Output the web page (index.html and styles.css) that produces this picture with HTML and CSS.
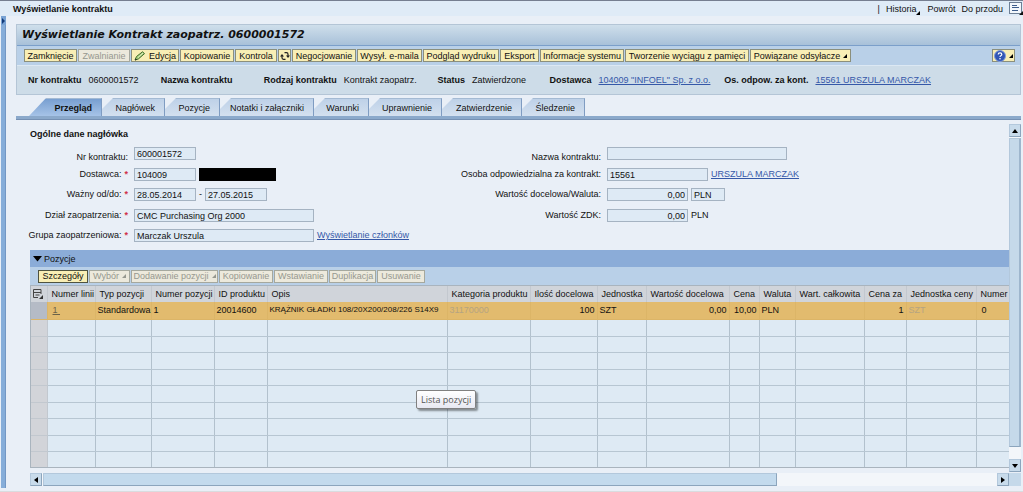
FILE: index.html
```html
<!DOCTYPE html>
<html lang="pl">
<head>
<meta charset="utf-8">
<title>Wyświetlanie kontraktu</title>
<link rel="stylesheet" href="styles.css">
</head>
<body>
<header class="topbar">
  <h1 class="topbar-title">Wyświetlanie kontraktu</h1>
  <nav class="topbar-nav">
    <span class="sep">|</span>
    <button class="nav-item history">Historia<svg class="corner" viewBox="0 0 4 4"><path d="M4 0V4H0z"/></svg></button>
    <button class="nav-item">Powrót</button>
    <button class="nav-item">Do przodu</button>
    <button class="nav-icon" aria-label="Menu"><svg viewBox="0 0 14 13" width="14" height="13"><rect x=".5" y=".5" width="12" height="11" fill="#f2f7fc" stroke="#6d7f96"/><path d="M3 3.5h5M3 5.5h7M3 8.5h6" stroke="#3c5c8c"/><path d="M14 9v4h-4z" fill="#111"/></svg></button>
  </nav>
</header>
<div class="shell">
  <aside class="rail"><button class="rail-toggle" aria-label="Rozwiń"><svg viewBox="0 0 5 8" width="5" height="8"><path d="M1 1l3 3-3 3z" fill="#123a78"/></svg></button></aside>
  <main class="page">
    <section class="head">
      <h2 class="head-title">Wyświetlanie Kontrakt zaopatrz. 0600001572</h2>
      <div class="toolbar">
        <button class="btn">Zamknięcie</button>
        <button class="btn" disabled>Zwalnianie</button>
        <button class="btn"><svg class="pencil" viewBox="0 0 12 10" width="12" height="10"><path d="M1 9l1.500-3.500L8.500.8l2 1.800L4.300 8z" fill="#a9cf7b" stroke="#3f6b2a"/><path d="M1 9.500l.6-2 1.400 1.200z" fill="#222"/><path d="M4 6.500l5-4.500" stroke="#f2f8d8" stroke-width=".8"/></svg>Edycja</button>
        <button class="btn">Kopiowanie</button>
        <button class="btn">Kontrola</button>
        <button class="btn" aria-label="Odśwież"><svg viewBox="0 0 10 10" width="10" height="10"><path d="M4.500 1.700H6.500Q8 1.700 8 3.200V5M5.500 8.300H3.500Q2 8.300 2 6.800V5" fill="none" stroke="#222" stroke-width="1.200"/><path d="M6 4.500h4L8 7zM0 5.500h4L2 3z" fill="#222"/></svg></button>
        <button class="btn">Negocjowanie</button>
        <button class="btn">Wysył. e-maila</button>
        <button class="btn">Podgląd wydruku</button>
        <button class="btn">Eksport</button>
        <button class="btn">Informacje systemu</button>
        <button class="btn">Tworzenie wyciągu z pamięci</button>
        <button class="btn">Powiązane odsyłacze<svg class="corner" viewBox="0 0 4 4"><path d="M4 0V4H0z"/></svg></button>
        <button class="btn help" aria-label="Pomoc"><svg viewBox="0 0 12 12" width="12" height="12"><circle cx="6" cy="6" r="5.500" fill="#3156b4" stroke="#7f9bdc"/><path d="M4.200 4.600Q4.200 2.800 6 2.800T7.800 4.400Q7.800 5.300 6.800 5.800 6 6.200 6 7" fill="none" stroke="#fff" stroke-width="1.200"/><circle cx="6" cy="8.800" r=".8" fill="#fff"/></svg><svg class="corner" viewBox="0 0 4 4"><path d="M4 0V4H0z"/></svg></button>
      </div>
      <dl class="info">
        <div><dt>Nr kontraktu</dt><dd>0600001572</dd></div>
        <div><dt>Nazwa kontraktu</dt></div>
        <div><dt>Rodzaj kontraktu</dt><dd>Kontrakt zaopatrz.</dd></div>
        <div><dt>Status</dt><dd>Zatwierdzone</dd></div>
        <div><dt>Dostawca</dt><dd><a href="#">104009 "INFOEL" Sp. z o.o.</a></dd></div>
        <div><dt>Os. odpow. za kont.</dt><dd><a href="#">15561 URSZULA MARCZAK</a></dd></div>
      </dl>
    </section>
    <nav class="tabs">
      <button class="tab active">Przegląd</button>
      <button class="tab">Nagłówek</button>
      <button class="tab">Pozycje</button>
      <button class="tab">Notatki i załączniki</button>
      <button class="tab">Warunki</button>
      <button class="tab">Uprawnienie</button>
      <button class="tab">Zatwierdzenie</button>
      <button class="tab">Śledzenie</button>
    </nav>
    <div class="view">
      <div class="content">
        <h3 class="section-title">Ogólne dane nagłówka</h3>
        <form class="forms">
          <div class="fields">
            <label for="nr" class="low">Nr kontraktu:</label><div><input id="nr" class="w-s" value="600001572" readonly></div>
            <label for="dost">Dostawca: <b>*</b></label><div><input id="dost" class="w-s" value="104009" readonly><span class="redacted"></span></div>
            <label for="od">Ważny od/do: <b>*</b></label><div><input id="od" class="w-s" value="28.05.2014" readonly><span class="dash">-</span><input class="w-s" aria-label="Ważny do" value="27.05.2015" readonly></div>
            <label for="dzial">Dział zaopatrzenia: <b>*</b></label><div><input id="dzial" class="w-l" value="CMC Purchasing Org 2000" readonly></div>
            <label for="grupa">Grupa zaopatrzeniowa: <b>*</b></label><div><input id="grupa" class="w-l" value="Marczak Urszula" readonly><a href="#">Wyświetlanie członków</a></div>
          </div>
          <div class="fields right">
            <label for="nazwa" class="low">Nazwa kontraktu:</label><div><input id="nazwa" class="w-l" readonly></div>
            <label for="osoba">Osoba odpowiedzialna za kontrakt:</label><div><input id="osoba" class="w-m" value="15561" readonly><a href="#">URSZULA MARCZAK</a></div>
            <label for="wart">Wartość docelowa/Waluta:</label><div><input id="wart" class="w-n" value="0,00" readonly><input class="w-c" aria-label="Waluta" value="PLN" readonly></div>
            <label for="zdk">Wartość ZDK:</label><div><input id="zdk" class="w-n" value="0,00" readonly><span>PLN</span></div>
          </div>
        </form>
        <section class="tray">
          <h3 class="tray-title"><svg viewBox="0 0 9 6" width="9" height="6"><path d="M0 0h9L4.500 5.500z"/></svg>Pozycje</h3>
          <div class="tray-tools">
            <button class="btn strong">Szczegóły</button>
            <button class="btn" disabled>Wybór<svg class="corner" viewBox="0 0 4 4"><path d="M4 0V4H0z"/></svg></button>
            <button class="btn" disabled>Dodawanie pozycji<svg class="corner" viewBox="0 0 4 4"><path d="M4 0V4H0z"/></svg></button>
            <button class="btn" disabled>Kopiowanie</button>
            <button class="btn" disabled>Wstawianie</button>
            <button class="btn" disabled>Duplikacja</button>
            <button class="btn" disabled>Usuwanie</button>
          </div>
          <div class="table-clip">
            <table class="items">
              <colgroup><col class="c0"><col class="c1"><col class="c2"><col class="c3"><col class="c4"><col class="c5"><col class="c6"><col class="c7"><col class="c8"><col class="c9"><col class="c10"><col class="c11"><col class="c12"><col class="c13"><col class="c14"><col class="c15"></colgroup>
              <thead><tr><th><svg viewBox="0 0 10 10" width="10" height="10"><path d="M8 5V.5H.5v8H5M.5 3.500h7.500M2.500 6h4" fill="none" stroke="#444"/><path d="M10 6v4H6z" fill="#333"/></svg></th><th>Numer linii</th><th>Typ pozycji</th><th>Numer pozycji</th><th>ID produktu</th><th>Opis</th><th>Kategoria produktu</th><th>Ilość docelowa</th><th>Jednostka</th><th>Wartość docelowa</th><th>Cena</th><th>Waluta</th><th>Wart. całkowita</th><th>Cena za</th><th>Jednostka ceny</th><th>Numer p</th></tr></thead>
              <tbody>
                <tr class="selected"><td></td><td class="in"><a href="#">1&nbsp;</a></td><td>Standardowa</td><td>1</td><td>20014600</td><td class="long">KRĄŻNIK GŁADKI 108/20X200/208/226 S14X9</td><td class="dim">31170000</td><td class="num">100</td><td>SZT</td><td class="num">0,00</td><td class="num">10,00</td><td>PLN</td><td></td><td class="num">1</td><td class="dim">SZT</td><td class="in">0</td></tr>
                <tr><td></td><td></td><td></td><td></td><td></td><td></td><td></td><td></td><td></td><td></td><td></td><td></td><td></td><td></td><td></td><td></td></tr>
                <tr><td></td><td></td><td></td><td></td><td></td><td></td><td></td><td></td><td></td><td></td><td></td><td></td><td></td><td></td><td></td><td></td></tr>
                <tr><td></td><td></td><td></td><td></td><td></td><td></td><td></td><td></td><td></td><td></td><td></td><td></td><td></td><td></td><td></td><td></td></tr>
                <tr><td></td><td></td><td></td><td></td><td></td><td></td><td></td><td></td><td></td><td></td><td></td><td></td><td></td><td></td><td></td><td></td></tr>
                <tr><td></td><td></td><td></td><td></td><td></td><td></td><td></td><td></td><td></td><td></td><td></td><td></td><td></td><td></td><td></td><td></td></tr>
                <tr><td></td><td></td><td></td><td></td><td></td><td></td><td></td><td></td><td></td><td></td><td></td><td></td><td></td><td></td><td></td><td></td></tr>
                <tr><td></td><td></td><td></td><td></td><td></td><td></td><td></td><td></td><td></td><td></td><td></td><td></td><td></td><td></td><td></td><td></td></tr>
                <tr><td></td><td></td><td></td><td></td><td></td><td></td><td></td><td></td><td></td><td></td><td></td><td></td><td></td><td></td><td></td><td></td></tr>
                <tr><td></td><td></td><td></td><td></td><td></td><td></td><td></td><td></td><td></td><td></td><td></td><td></td><td></td><td></td><td></td><td></td></tr>
              </tbody>
            </table>
          </div>
          <div class="tooltip" role="tooltip">Lista pozycji</div>
        </section>
      </div>
      <div class="vscroll">
        <button class="scroll-btn" aria-label="W górę"><svg viewBox="0 0 6 4" width="6" height="4"><path d="M0 4l3-4 3 4z"/></svg></button>
        <div class="vthumb"></div>
        <button class="scroll-btn" aria-label="W dół"><svg viewBox="0 0 6 4" width="6" height="4"><path d="M0 0l3 4 3-4z"/></svg></button>
      </div>
      <div class="hscroll">
        <button class="scroll-btn" aria-label="W lewo"><svg viewBox="0 0 4 6" width="4" height="6"><path d="M4 0L0 3l4 3z"/></svg></button>
        <div class="htrack"><div class="hthumb"></div></div>
        <button class="scroll-btn" aria-label="W prawo"><svg viewBox="0 0 4 6" width="4" height="6"><path d="M0 0l4 3-4 3z"/></svg></button>
      </div>
      <div class="scroll-corner"></div>
    </div>
  </main>
</div>
</body>
</html>
```
FILE: styles.css
```css
* { box-sizing: border-box; }
body {
  margin: 0;
  min-height: 100vh;
  display: flex;
  flex-direction: column;
  background: #e9eff7;
  color: #111;
  font: 9px/12px "Liberation Sans", Arial, sans-serif;
}
button, input { font: inherit; color: inherit; margin: 0; }
button { white-space: nowrap; }
h1, h2, h3, dl, dd { margin: 0; font-size: inherit; }
a { color: #3558a8; }
svg { flex: none; display: block; }
.corner { width: 4px; height: 4px; }

.topbar {
  display: flex;
  align-items: center;
  justify-content: space-between;
  height: 16px;
  padding: 0 0 0 13px;
  border-top: 1px solid #757e90;
  background: #dfebf7;
}
.topbar-nav { display: flex; align-items: center; gap: 6px; }
.nav-item, .nav-icon { border: 0; padding: 0; background: none; }
.history { display: flex; align-items: flex-end; margin-right: 1px; }
.nav-icon { display: flex; }

.shell { flex: 1; display: flex; padding: 0 2px 3px 1px; border-bottom: 1px solid #d9dcdf; }
.rail { width: 5px; background: #86add9; border-right: 1px solid #7397c4; }
.rail-toggle { display: block; width: 5px; height: 9px; padding: 0; border: 0; background: #78a2d4; }
.page { flex: 1; min-width: 0; display: flex; flex-direction: column; padding: 8px 0 2px 10px; }

.head { border: 1px solid #b4c5d6; background: #cddce8; }
.head-title {
  height: 21px;
  padding-left: 5px;
  background: linear-gradient(#cfdfeb, #a8c1d9);
  border-bottom: 1px solid #7b9fca;
  font: italic bold 11px/20px "DejaVu Sans", Verdana, sans-serif;
}
.toolbar {
  display: grid;
  grid-template-columns: 53px 52px 48px 54px 42px 13px 64px 65px 76px 39px 84px 124px 101px 1fr;
  column-gap: 1px;
  align-items: center;
  height: 20px;
  padding: 0 5px 0 7px;
  background: #b9d0e8;
  border-bottom: 1px solid #dce8f3;
}
.btn {
  display: flex;
  align-items: center;
  justify-content: center;
  gap: 3px;
  height: 13px;
  padding: 0;
  border: 1px solid #8b8f7c;
  background: #f8eeb5;
}
.btn:disabled { color: #96988f; background: #ece9dc; border-color: #a5a89e; }
.btn:disabled .corner { fill: #96988f; }
.toolbar .help { width: 23px; justify-self: end; }
.info {
  display: grid;
  grid-template-columns: 133fr 103fr 174fr 112fr 175fr 296fr;
  align-items: center;
  height: 28px;
  padding-left: 11px;
}
.info div { display: flex; gap: 7px; white-space: nowrap; }
.info dt { font-weight: bold; }

.tabs {
  display: grid;
  grid-template-columns: 73px 63px 55px 94px 55px 73px 80px 63px;
  height: 24px;
  padding: 3px 0 0 13px;
  border-bottom: 3px solid #8ba9cb;
}
.tab {
  padding: 0 9px 0 0;
  border: 0;
  border-right: 1px solid #7f9cc2;
  border-top: 1px solid #a4bad3;
  background: linear-gradient(#bed1e8, #d3e0ef);
  text-align: right;
  clip-path: polygon(0 11px, 11px 0, 100% 0, 100% 100%, 0 100%);
}
.tab.active {
  font-weight: bold;
  background: linear-gradient(#789fd1, #a6c3e7);
  clip-path: polygon(0 100%, 17px 0, 100% 0, 100% 100%);
}

.view {
  flex: 1;
  display: grid;
  grid-template-columns: 1fr 12px;
  grid-template-rows: 1fr 13px;
  row-gap: 1px;
  padding-top: 4px;
  border-top: 1px solid #7590b3;
}
.content { min-width: 0; display: flex; flex-direction: column; padding-left: 14px; }
.section-title { height: 23px; line-height: 20px; }
.forms { display: grid; grid-template-columns: 447px 1fr; height: 103px; }
.fields {
  display: grid;
  grid-template-columns: 98px 1fr;
  grid-template-rows: 21px 20px 21px 20px 21px;
  column-gap: 6px;
}
.fields.right { grid-template-columns: 124px 1fr; }
.fields label { display: flex; justify-content: flex-end; height: 13px; gap: 3px; white-space: nowrap; }
.fields .low { padding-top: 4px; }
.fields b { color: #d0304a; }
.fields div { display: flex; gap: 3px; height: 13px; white-space: nowrap; }
.fields input {
  height: 13px;
  padding: 0 2px;
  border: 1px solid #a5b3c2;
  background: #deeaf5;
}
.fields .w-s { width: 62px; }
.fields .w-c { width: 34px; }
.fields .w-n { width: 81px; text-align: right; }
.fields .w-m { width: 101px; }
.fields .w-l { width: 180px; }
.redacted { width: 77px; background: #000; }
.dash { width: 3px; }

.tray { position: relative; }
.tray-title {
  display: flex;
  align-items: center;
  gap: 2px;
  height: 17px;
  padding-left: 3px;
  background: #8bacd8;
  font-weight: normal;
}
.tray-tools {
  display: grid;
  grid-template-columns: 50px 41px 87px 54px 54px 47px 48px;
  column-gap: 1px;
  align-items: center;
  height: 18px;
  padding-left: 8px;
  background: #b9d0e8;
}
.strong { border-color: #4f5340; }
.table-clip { overflow: hidden; border: 1px solid #a9b4be; border-right: 0; }
.items { width: 1020px; table-layout: fixed; border-collapse: collapse; }
.items th, .items td { padding: 0 2px; white-space: nowrap; overflow: hidden; }
.items th {
  height: 16px;
  padding: 0 0 0 4px;
  background: #d0d4da;
  border-right: 1px solid #c3c8cf;
  font-weight: normal;
  text-align: left;
}
.items th:first-child { padding-left: 2px; }
.items td { height: 17px; background: #deeaf4; border-right: 1px solid #b2c1cd; border-bottom: 1px solid #b7c6d2; }
.items tr:nth-child(odd) td { height: 16px; }
.items tr:last-child td { height: 16px; border-bottom: 0; }
.items td:first-child { background: #d2d4d9; border-color: #c2c8cf; }
.items tr.selected td { height: 17px; background: #e2bb6e; border-color: #dcb567; }
.items tr.selected td:first-child { background: #b5bbc6; }
.items .in { padding-left: 5px; }
.items td.num { text-align: right; }
.items .long { font-size: 8px; }
.items .dim { color: #b5a482; }
.items a { color: #6c6248; }
.c0 { width: 16px; }
.c1 { width: 48px; }
.c2 { width: 56px; }
.c3 { width: 63px; }
.c4 { width: 53px; }
.c5 { width: 180px; }
.c6 { width: 83px; }
.c7 { width: 67px; }
.c8 { width: 49px; }
.c9 { width: 83px; }
.c10 { width: 30px; }
.c11 { width: 36px; }
.c12 { width: 69px; }
.c13 { width: 42px; }
.c14 { width: 70px; }

.tooltip {
  position: absolute;
  left: 386px;
  top: 140px;
  padding: 1px 4px;
  border: 1px solid #808080;
  border-radius: 2px;
  background: linear-gradient(#fff, #e8e9f2);
  box-shadow: 2px 2px 2px #0006;
  color: #555;
  font: 9px/15px "Open Sans", sans-serif;
}

.vscroll { display: flex; flex-direction: column; gap: 1px; background: #f3f6fa; }
.vthumb { flex: 1; margin-bottom: 11px; background: #c5d9ea; border: 1px solid #b3c8dc; border-right: 2px solid #9eb6cd; border-bottom-color: #8ca5bd; }
.hscroll { display: flex; gap: 1px; margin-left: 14px; background: #f3f6fa; }
.htrack { flex: 1; display: flex; }
.hthumb { width: 77%; background: #c3daed; border: 1px solid #b3c8dc; border-bottom-color: #8ca5bd; border-right-color: #8ca5bd; }
.scroll-btn {
  display: flex;
  align-items: center;
  justify-content: center;
  width: 12px;
  height: 13px;
  padding: 0;
  border: 1px solid #b3c8dc;
  border-right-color: #8ca5bd;
  border-bottom-color: #8ca5bd;
  background: #c8dbeb;
}
.scroll-corner { background: #c5d9ea; }
```
